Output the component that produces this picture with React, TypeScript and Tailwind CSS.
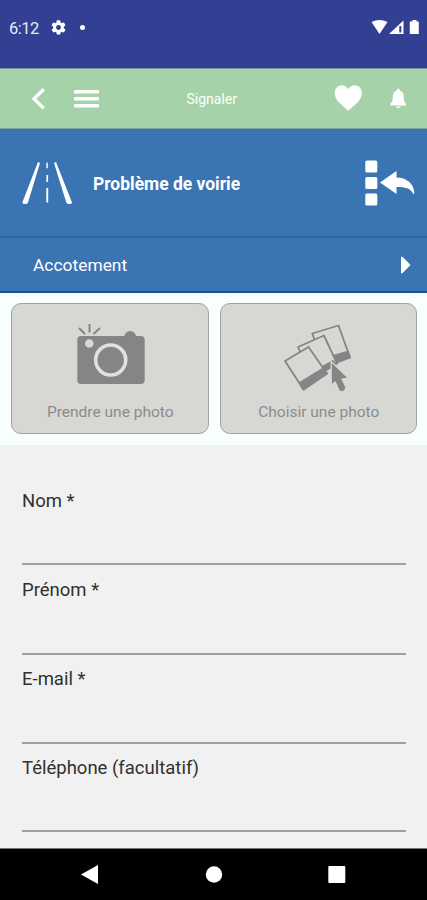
import React from "react";

const fields = [
  { label: "Nom *", box: "h-[89px] pt-[13px]" },
  { label: "Prénom *", box: "h-[90px] pt-[13px]" },
  { label: "E-mail *", box: "h-[89px] pt-[12px]" },
  { label: "Téléphone (facultatif)", box: "h-[88px] pt-[12px]" },
];

function StatusBar() {
  return (
    <div className="flex h-[68px] shrink-0 items-start justify-between border-b border-[#2c3a83] bg-[#333f92] pt-[18px] pl-[9px] pr-[6px] text-white">
      <div className="flex h-5 items-center">
        <span className="w-[41px] pt-px text-[16.5px] leading-5 tracking-[-0.5px] text-[#e6e9fa]">6:12</span>
        <svg className="mb-[2px] h-[17px] w-[17px]" viewBox="0 0 24 24" fill="currentColor">
          <path d="M19.4 13c.1-.3.1-.6.1-1s0-.7-.1-1l2.200-1.700c.2-.2.3-.5.1-.7l-2-3.500c-.1-.2-.4-.3-.6-.2l-2.500 1c-.5-.4-1.100-.7-1.700-1l-.4-2.600c0-.3-.2-.4-.5-.4h-4c-.3 0-.5.200-.5.400l-.4 2.700c-.6.200-1.200.600-1.700 1l-2.500-1c-.2-.1-.5 0-.6.200l-2 3.500c-.1.200-.1.500.1.600L4.600 11a8 8 0 0 0 0 2l-2.100 1.700c-.2.200-.2.400-.1.600l2 3.500c.1.200.4.300.6.200l2.500-1c.5.400 1.100.7 1.700 1l.4 2.600c0 .3.200.4.500.4h4c.3 0 .5-.2.500-.4l.4-2.600c.6-.3 1.200-.6 1.700-1l2.500 1c.2.100.5 0 .6-.2l2-3.500c.1-.2.100-.5-.1-.6zM12 15.500a3.500 3.500 0 1 1 0-7 3.500 3.500 0 0 1 0 7z" />
        </svg>
        <span className="ml-[13px] mb-[2px] h-[5px] w-[5px] rounded-full bg-white" />
      </div>
      <svg className="h-5 w-[52px]" viewBox="369 18 52 20" fill="currentColor">
        <path d="M371.500 22q8-4 16 0L379.500 34z" />
        <path fillRule="evenodd" d="M403.500 20.500V34H389zM399.300 26h2v6.500h-2z" />
        <path d="M412.500 20h4v1.500h2.300V34h-9V21.500h2.700z" />
      </svg>
    </div>
  );
}

function Header() {
  return (
    <header className="flex h-[61px] shrink-0 items-center border-y border-t-[#8296a0] border-b-[#75a5a5] bg-[#a5d2a8] text-white">
      <svg className="ml-[30px] h-6 w-[18px]" viewBox="30 87 18 24" fill="none" stroke="currentColor" strokeWidth="3.400">
        <path d="M43.800 89.200 34 98.800l9.800 9.600" />
      </svg>
      <svg className="ml-[24px] h-6 w-[30px]" viewBox="72 87 30 24" fill="currentColor">
        <rect x="74" y="90" width="25" height="3.600" rx=".6" />
        <rect x="74" y="97" width="25" height="3.600" rx=".6" />
        <rect x="74" y="104" width="25" height="3.600" rx=".6" />
      </svg>
      <h1 className="ml-[84px] w-[60px] pl-[0.5px] pt-px text-[14px] leading-5">Signaler</h1>
      <svg className="ml-[86px] h-[30px] w-[32px]" viewBox="332 84 32 30" fill="currentColor">
        <path d="M348.300 111C344.500 106.500 334.700 101.500 334.700 93c0-8.500 10.200-10.500 13.600-4 3.500-6.500 13.600-4.500 13.600 4 0 8.500-9.800 13.500-13.600 18z" />
      </svg>
      <svg className="ml-[24px] h-6 w-[20px]" viewBox="388 87 20 24" fill="currentColor">
        <path d="M398.300 88.500q1.500 0 1.500 2c3 1 4 3.500 4 6 0 4 .5 5.500 2.200 7.200v1.800h-15.500v-1.800c1.800-1.700 2.300-3.200 2.300-7.200 0-2.500 1-5 4-6q0-2 1.500-2zM396 106.500h4.600c-.6 2-4 2-4.600 0z" />
      </svg>
    </header>
  );
}

function CameraIcon() {
  return (
    <svg className="h-[68px] w-[76px]" viewBox="72 320 76 68" fill="#858585">
      <rect x="77.300" y="336" width="67.400" height="48" rx="4" />
      <path d="M124 337a6.200 7 0 0 1 12.300 0z" />
      <circle cx="89.300" cy="343.500" r="4.300" fill="#d7d8d3" />
      <circle cx="110.700" cy="360" r="15" stroke="#e0e0df" strokeWidth="3.600" />
      <path d="m79 328 6 6m4.500-10v8.500M100 328l-6.500 6" stroke="#858585" strokeWidth="2" />
    </svg>
  );
}

function PicturesIcon() {
  return (
    <svg className="h-[74px] w-[76px]" viewBox="280.500 320 76 74" fill="#d7d8d3" stroke="#858585" strokeWidth="1.800" strokeLinejoin="round">
      <path d="M312.700 333.500 339 325.500 350.500 357.500 325 366.500z" />
      <path fill="#858585" d="M324 358.500 348.500 351.500 350.500 357.500 326 367z" />
      <path d="M298.500 347 324.500 335.500 337.500 363.500 312 378z" />
      <path fill="#858585" d="M318 369.500 333.500 361 336 364.500 320 374z" />
      <path d="M285.500 361 309 347 327.500 373.500 304 389.500z" />
      <path fill="#858585" d="M300 383 323.500 368.500 327.500 373.500 304 389.500z" />
      <path fill="#858585" stroke="#d7d8d3" strokeWidth="1.200" d="M331.700 361.500 348.700 378l-6.200 1.200 4 8.300-1.500 3.500-5 .5-4.300-9.500-3.900 3z" />
    </svg>
  );
}

function PhotoButton({ label, children }: { label: string; children: React.ReactNode }) {
  return (
    <button className="flex h-[131px] flex-1 flex-col items-center rounded-[10px] border border-[#a1a3a1] bg-[#d7d8d3] text-[#8b8c89]">
      <span className="flex h-[96px] items-start justify-center pt-[16px]">{children}</span>
      <span className="pl-px text-[15.500px] leading-6">{label}</span>
    </button>
  );
}

export default function App() {
  return (
    <main className="flex h-[900px] w-[427px] flex-col overflow-hidden bg-[#f1f1f1] font-[Roboto,sans-serif]">
      <StatusBar />
      <Header />
      <section className="flex h-[109px] shrink-0 items-center border-b-2 border-[#32659e] bg-[#3a74b3] text-white">
        <svg className="ml-[20px] h-[48px] w-[54px]" viewBox="20 159 54 48" fill="currentColor">
          <path d="m38 162 2 1-12 39.500q-.5 1.500-3 1.500-3 0-2.500-2zM54 163l2-1 15.800 40q.5 2-2.500 2-2.500 0-3-1.500z" />
          <path d="M46.500 162.500h1.300v5.800h-1.500zM46.400 175h1.700v7h-1.700zM46.300 188h1.900v14.500h-1.900z" />
        </svg>
        <h2 className="ml-[19px] w-[160px] whitespace-nowrap pt-[2px] text-[17.450px] font-bold leading-6">Problème de voirie</h2>
        <svg className="ml-[110px] h-[50px] w-[54px]" viewBox="363 158 54 50" fill="currentColor">
          <rect x="365.300" y="160.500" width="12" height="12" rx="1.500" />
          <rect x="365.300" y="177" width="12" height="12" rx="1.500" />
          <rect x="365.300" y="193.500" width="12" height="12" rx="1.500" />
          <path d="M380 182.500 396.500 171v6.500c10 0 17.500 6 17.800 15.500q-.5 2-1.500 0c-2.500-4.500-7.500-6-16.300-6v7z" />
        </svg>
      </section>
      <section className="flex h-[55px] shrink-0 items-center justify-between border-b-2 border-[#155595] bg-[#3a74b3] pt-px pl-[33px] pr-[16px] text-white">
        <span className="text-[17.400px] leading-6">Accotement</span>
        <svg className="h-5 w-[11px]" viewBox="400 255 11 20" fill="currentColor">
          <path d="M401 256.500v17l2-.8 7.500-7.700-7.500-7.700z" />
        </svg>
      </section>
      <section className="flex h-[152px] shrink-0 gap-[11px] bg-[#f7ffff] px-[11px] pt-[10px] pr-[10px]">
        <PhotoButton label="Prendre une photo"><CameraIcon /></PhotoButton>
        <PhotoButton label="Choisir une photo"><PicturesIcon /></PhotoButton>
      </section>
      <form className="h-[404px] shrink-0 border-b border-[#777777] bg-[#f1f1f1] pt-[31px] pl-[22px] pr-[21px]">
        {fields.map((field) => (
          <label key={field.label} className={`block border-b-2 border-[#a0a0a0] text-[18.500px] leading-6 text-[#303030] ${field.box}`}>
            {field.label}
          </label>
        ))}
      </form>
      <nav className="flex h-[51px] shrink-0 items-center bg-black">
        <svg className="h-[51px] w-[427px]" viewBox="0 849 427 51" fill="white">
          <path d="M81 874.500 98 865v19z" />
          <circle cx="214" cy="874.500" r="8.200" />
          <rect x="328.300" y="866" width="17" height="17" rx="1" />
        </svg>
      </nav>
    </main>
  );
}
